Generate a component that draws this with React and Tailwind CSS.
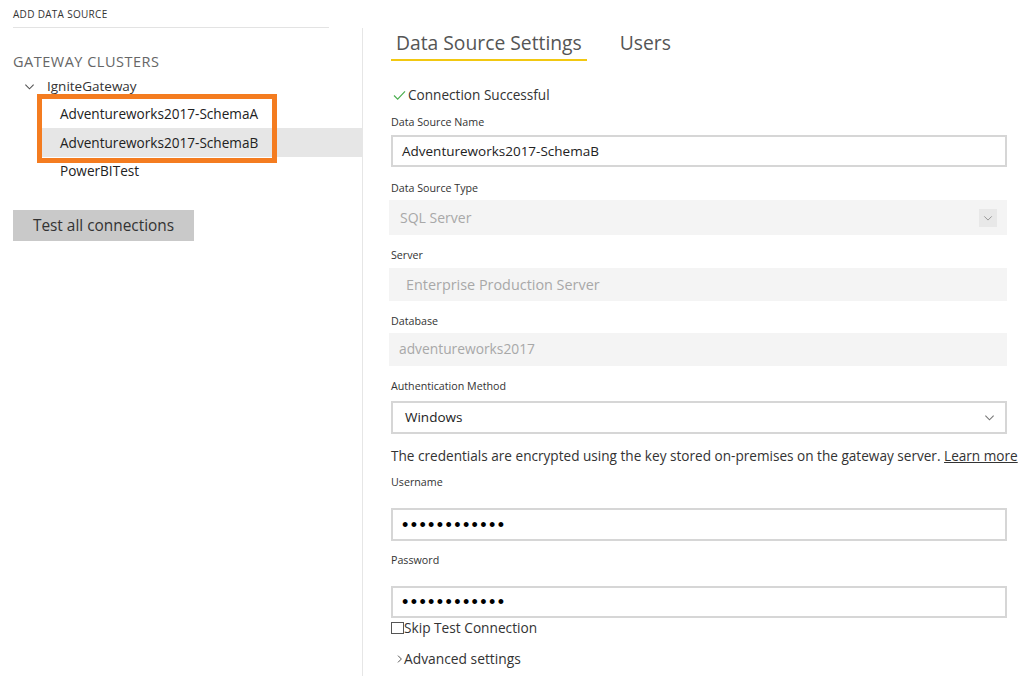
import React from "react";

const Chevron = ({ className = "", dir = "down" }) => (
  <svg
    viewBox="0 0 12 12"
    className={className}
    fill="none"
    stroke="currentColor"
    strokeWidth="1.2"
  >
    {dir === "down" ? (
      <polyline points="1.5,4 6,8.5 10.5,4" />
    ) : (
      <polyline points="4,1.5 8.5,6 4,10.5" />
    )}
  </svg>
);

const Label = ({ children, className = "" }) => (
  <div className={`h-[14px] leading-[14px] text-[10.7px] text-[#333] ${className}`}>{children}</div>
);

const Dots = () => (
  <span className="font-['Liberation_Sans',sans-serif] text-[18px] leading-[18px] tracking-[2.4px] text-black">
    ••••••••••••
  </span>
);

export default function App() {
  return (
    <div className="w-[1021px] h-[676px] bg-white flex font-['Open_Sans','Noto_Sans',sans-serif] text-[#333] overflow-hidden">
      {/* Left column */}
      <div className="w-[363px] shrink-0 flex flex-col relative">
        <div className="pl-[13px] pr-[34px]">
          <div className="mt-[8px] h-[12px] leading-[12px] text-[10px] tracking-[0.3px] text-[#333]">ADD DATA SOURCE</div>
          <div className="mt-[7px] h-px bg-[#e3e3e3]" />
        </div>
        <div className="flex-1 border-r border-[#e6e6e6] flex flex-col">
          <div className="mt-[25px] pl-[13px] h-[18px] leading-[18px] text-[14.5px] text-[#666] tracking-[0.5px]">
            GATEWAY CLUSTERS
          </div>
          <div className="mt-[6px] h-[18px] flex items-center text-[13.5px] text-[#333]">
            <Chevron className="w-[11px] h-[11px] ml-[24px] text-[#555]" />
            <span className="ml-[12px]">IgniteGateway</span>
          </div>
          <div className="mt-[5px] ml-[40px] h-[28px] leading-[28px] pl-[20px] text-[13.6px] text-[#222]">
            Adventureworks2017-SchemaA
          </div>
          <div className="ml-[40px] h-[29px] leading-[29px] pl-[20px] text-[13.6px] text-[#222] bg-[#e6e6e6]">
            Adventureworks2017-SchemaB
          </div>
          <div className="ml-[40px] h-[28px] leading-[28px] pl-[20px] text-[13.6px] text-[#222]">
            PowerBITest
          </div>
          <div className="mt-[25px] ml-[13px] w-[181px] h-[31px] bg-[#c9c9c9] flex items-center justify-center text-[15.4px] text-[#333]">
            Test all connections
          </div>
        </div>
        {/* orange annotation */}
        <div className="absolute left-[37px] top-[94px] w-[240px] h-[69px] border-[5px] border-[#f47c20] pointer-events-none" />
      </div>

      {/* Right column */}
      <div className="w-[658px] shrink-0 min-w-0 pl-[28px] pr-[14px] flex flex-col">
        <div className="mt-[28px] flex items-start">
          <div className="h-[33px] pt-[3px] leading-[24px] px-[5px] border-b-2 border-[#f2c811] text-[19.3px] text-[#555]">
            Data Source Settings
          </div>
          <div className="ml-[33px] h-[33px] pt-[3px] leading-[24px] text-[19.3px] text-[#555]">Users</div>
        </div>

        <div className="mt-[25px] h-[18px] flex items-center text-[13.6px] text-[#333]">
          <svg viewBox="0 0 14 12" className="w-[13px] h-[11px] ml-[2px]" fill="none" stroke="#4caf50" strokeWidth="1.3">
            <polyline points="1,6 5,10 13,1.5" />
          </svg>
          <span className="ml-[2px]">Connection Successful</span>
        </div>

        <Label className="mt-[11px]">Data Source Name</Label>
        <div className="mt-[6px] h-[32px] border-2 border-[#d6d6d6] flex items-center pl-[9px] text-[13.5px] text-[#222]">
          Adventureworks2017-SchemaB
        </div>

        <Label className="mt-[14px]">Data Source Type</Label>
        <div className="mt-[5px] -ml-[2px] h-[35px] bg-[#f4f4f4] flex items-center pl-[11px] pr-[10px] text-[14px] text-[#a8a8a8]">
          <span className="flex-1">SQL Server</span>
          <div className="w-[18px] h-[18px] bg-[#e8e8e8] flex items-center justify-center">
            <Chevron className="w-[10px] h-[10px] text-[#999]" />
          </div>
        </div>

        <Label className="mt-[13px]">Server</Label>
        <div className="mt-[6px] -ml-[2px] h-[33px] bg-[#f4f4f4] flex items-center pl-[17px] text-[14.4px] text-[#a8a8a8]">
          Enterprise Production Server
        </div>

        <Label className="mt-[13px]">Database</Label>
        <div className="mt-[5px] -ml-[2px] h-[33px] bg-[#f4f4f4] flex items-center pl-[10px] text-[13.8px] text-[#a8a8a8]">
          adventureworks2017
        </div>

        <Label className="mt-[13px]">Authentication Method</Label>
        <div className="mt-[8px] h-[33px] border-2 border-[#d6d6d6] flex items-center pl-[12px] pr-[10px] text-[13.5px] text-[#222]">
          <span className="flex-1">Windows</span>
          <Chevron className="w-[11px] h-[11px] text-[#777]" />
        </div>

        <div className="mt-[13px] h-[18px] leading-[18px] text-[13.6px] text-[#333] whitespace-nowrap">
          The credentials are encrypted using the key stored on-premises on the gateway server.{" "}
          <span className="underline">Learn more</span>
        </div>

        <Label className="mt-[10px]">Username</Label>
        <div className="mt-[19px] h-[33px] border-2 border-[#d6d6d6] flex items-center pl-[9px]">
          <Dots />
        </div>

        <Label className="mt-[12px]">Password</Label>
        <div className="mt-[19px] h-[32px] border-2 border-[#d6d6d6] flex items-center pl-[9px]">
          <Dots />
        </div>

        <div className="mt-[3px] h-[14px] flex items-center text-[13.7px] text-[#333]">
          <div className="w-[13px] h-[12px] border border-[#555] bg-white" />
          <span className="leading-[14px]">Skip Test Connection</span>
        </div>

        <div className="mt-[15px] h-[18px] flex items-center text-[13.8px] text-[#333]">
          <Chevron dir="right" className="w-[9px] h-[10px] ml-[4px] text-[#444]" />
          <span>Advanced settings</span>
        </div>
      </div>
    </div>
  );
}
